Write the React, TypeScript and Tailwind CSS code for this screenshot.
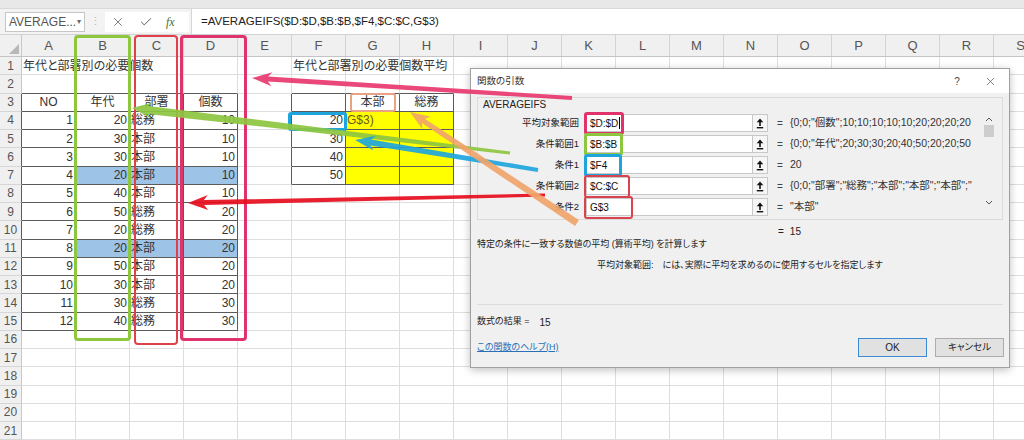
import React from 'react';
import clsx from 'clsx';
import { X, Check } from 'lucide-react';

const COLS = 'ABCDEFGHIJKLMNOPQRS'.split('');
const ROW_COUNT = 21;

type CellData = { v: string; align: 'left' | 'right' | 'center'; tone?: 'ref' };

const RECORDS: [number, number, string, number][] = [
    [1, 20, '総務', 10],
    [2, 30, '本部', 10],
    [3, 30, '本部', 10],
    [4, 20, '本部', 10],
    [5, 40, '本部', 10],
    [6, 50, '総務', 20],
    [7, 20, '総務', 20],
    [8, 20, '本部', 20],
    [9, 50, '本部', 20],
    [10, 30, '本部', 20],
    [11, 30, '総務', 30],
    [12, 40, '総務', 30],
];

const SHEET: Record<string, CellData> = {
    A1: { v: '年代と部署別の必要個数', align: 'left' },
    F1: { v: '年代と部署別の必要個数平均', align: 'left' },
    A3: { v: 'NO', align: 'center' },
    B3: { v: '年代', align: 'center' },
    C3: { v: '部署', align: 'center' },
    D3: { v: '個数', align: 'center' },
    G3: { v: '本部', align: 'center' },
    H3: { v: '総務', align: 'center' },
    F4: { v: '20', align: 'right' },
    F5: { v: '30', align: 'right' },
    F6: { v: '40', align: 'right' },
    F7: { v: '50', align: 'right' },
    G4: { v: 'G$3)', align: 'left', tone: 'ref' },
};

RECORDS.forEach(([no, age, dept, qty], i) => {
    const r = i + 4;
    SHEET['A' + r] = { v: String(no), align: 'right' };
    SHEET['B' + r] = { v: String(age), align: 'right' };
    SHEET['C' + r] = { v: dept, align: 'left' };
    SHEET['D' + r] = { v: String(qty), align: 'right' };
});

const inTable = (r: number, c: number) =>
    (r >= 3 && r <= 15 && c >= 0 && c <= 3) || (r >= 3 && r <= 7 && c >= 5 && c <= 7);

const fillFor = (r: number, c: number) => {
    if ((r === 7 || r === 11) && c >= 1 && c <= 3) return 'bg-[#9dc3e6]';
    if (r >= 4 && r <= 7 && (c === 6 || c === 7)) return 'bg-[#ffff00]';
    return '';
};

const SheetCell = ({ r, c }: { r: number; c: number }) => {
    const cell = SHEET[COLS[c] + r];
    const rightDark = inTable(r, c) || inTable(r, c + 1);
    const bottomDark = inTable(r, c) || inTable(r + 1, c);

    return (
        <div
            className={clsx(
                'relative h-full w-[54px] shrink-0 border-r border-b',
                rightDark ? 'border-r-[#5b5b5b]' : 'border-r-[#dedede]',
                bottomDark ? 'border-b-[#5b5b5b]' : 'border-b-[#dedede]',
                fillFor(r, c)
            )}
        >
            {cell && (
                <span
                    className={clsx(
                        'absolute inset-y-0 z-10 flex items-center whitespace-nowrap leading-none',
                        cell.align === 'left' && 'left-[1px]',
                        cell.align === 'right' && 'right-[2px]',
                        cell.align === 'center' && 'inset-x-0 justify-center',
                        cell.tone === 'ref' ? 'text-[#6b5a20]' : 'text-[#333]'
                    )}
                >
                    {cell.v}
                </span>
            )}
        </div>
    );
};

const UpArrowIcon = () => (
    <svg width="8" height="11" viewBox="0 0 8 11">
        <path d="M4 0.5 L7.3 4.3 H0.7 Z" fill="#111" />
        <rect x="3.2" y="4" width="1.6" height="4" fill="#111" />
        <rect x="0.8" y="9" width="6.4" height="1.4" fill="#111" />
    </svg>
);

const ARGS = [
    {
        label: '平均対象範囲',
        value: '$D:$D',
        result: '{0;0;"個数";10;10;10;10;10;20;20;20;20',
        mark: 'w-[40px] border-[3px] border-[#e0336b]',
        caret: true,
    },
    {
        label: '条件範囲1',
        value: '$B:$B',
        result: '{0;0;"年代";20;30;30;20;40;50;20;20;50',
        mark: 'w-[39px] border-[3px] border-[#8dc63f]',
    },
    {
        label: '条件1',
        value: '$F4',
        result: '20',
        mark: 'w-[38px] border-[3px] border-[#1ea5de]',
    },
    {
        label: '条件範囲2',
        value: '$C:$C',
        result: '{0;0;"部署";"総務";"本部";"本部";"本部";"',
        mark: 'w-[46px] border-2 border-[#d9434f]',
    },
    {
        label: '条件2',
        value: 'G$3',
        result: '"本部"',
        mark: 'w-[49px] border-2 border-[#d9434f]',
    },
];

// tip -> tail, widths near the head and at the tail
const arrowPoints = (
    tx: number, ty: number, sx: number, sy: number,
    w1: number, w2: number, hl: number, hw: number
) => {
    const len = Math.hypot(sx - tx, sy - ty);
    const ux = (sx - tx) / len;
    const uy = (sy - ty) / len;
    const px = -uy;
    const py = ux;
    const bx = tx + ux * hl;
    const by = ty + uy * hl;
    const nx = tx + ux * (hl * 0.8);
    const ny = ty + uy * (hl * 0.8);
    const pts = [
        [tx, ty],
        [bx + (px * hw) / 2, by + (py * hw) / 2],
        [nx + (px * w1) / 2, ny + (py * w1) / 2],
        [sx + (px * w2) / 2, sy + (py * w2) / 2],
        [sx - (px * w2) / 2, sy - (py * w2) / 2],
        [nx - (px * w1) / 2, ny - (py * w1) / 2],
        [bx - (px * hw) / 2, by - (py * hw) / 2],
    ];
    return pts.map(p => p.map(n => n.toFixed(1)).join(',')).join(' ');
};

const ARROWS = [
    { color: '#e8386f', pts: arrowPoints(252, 78, 572, 98, 5, 4, 20, 14) },
    { color: '#8dc63f', pts: arrowPoints(132, 108, 510, 153, 8, 3, 20, 16) },
    { color: '#1ea5de', pts: arrowPoints(355, 140, 538, 170, 6, 4, 20, 15) },
    { color: '#e60c1c', pts: arrowPoints(188, 203, 545, 195, 5, 3, 20, 15) },
    { color: '#f0a46a', pts: arrowPoints(410, 112, 577, 223, 5, 7, 20, 15) },
];

const FunctionDialog = () => (
    <div className="absolute left-[470px] top-[68px] z-30 flex h-[300px] w-[540px] flex-col border border-[#a0a0a0] bg-[#f0f0f0] text-[9px] text-[#222] shadow-[0_2px_8px_rgba(0,0,0,0.25)] [font-feature-settings:'palt']">
        <div className="flex h-[24px] shrink-0 items-center bg-white pl-[6px] pr-[12px]">
            <span className="text-[9.5px] text-[#333]">関数の引数</span>
            <div className="ml-auto flex items-center gap-[20px] text-[#444]">
                <span className="w-[14px] text-center text-[10px]">?</span>
                <X size={13} strokeWidth={1.2} color="#444" />
            </div>
        </div>

        <div className="mx-[6px] mt-[4px] flex h-[123px] border border-[#dadada]">
            <div className="flex min-w-0 flex-1 flex-col">
                <div className="h-[13px] pl-[5px] text-[10px] leading-[13px] text-[#222]">AVERAGEIFS</div>
                <div className="mt-[3px] flex flex-col gap-[3px]">
                    {ARGS.map(arg => (
                        <div key={arg.label} className="flex h-[18px] items-center">
                            <div className="w-[101px] text-right text-[9.5px] text-[#222]">{arg.label}</div>
                            <div className="relative ml-[7px] flex h-full w-[182px] items-center border border-[#c8c8c8] bg-white">
                                <span className="pl-[3px] text-[10px] text-[#111]">{arg.value}</span>
                                {arg.caret && <span className="ml-[1px] h-[12px] w-px bg-black" />}
                                <div className="ml-auto flex h-full w-[15px] items-center justify-center border-l border-[#c8c8c8] bg-[#f6f6f6]">
                                    <UpArrowIcon />
                                </div>
                                <div className={clsx('absolute -left-[3px] -top-[3px] h-[23px] rounded-[3px]', arg.mark)} />
                            </div>
                            <span className="ml-[9px] w-[13px] text-[10px] text-[#444]">=</span>
                            <span className="w-[188px] whitespace-nowrap text-[10.5px] text-[#333]">
                                {arg.result}
                            </span>
                        </div>
                    ))}
                </div>
            </div>
            <div className="mr-[7px] flex w-[12px] flex-col items-center pt-[19px]">
                <svg width="8" height="5" viewBox="0 0 8 5">
                    <path d="M1 4 L4 1 L7 4" stroke="#555" strokeWidth="1" fill="none" />
                </svg>
                <div className="mt-[3px] h-[12px] w-[10px] bg-[#cdcdcd]" />
                <svg className="mt-[63px]" width="8" height="5" viewBox="0 0 8 5">
                    <path d="M1 1 L4 4 L7 1" stroke="#555" strokeWidth="1" fill="none" />
                </svg>
            </div>
        </div>

        <div className="mt-[4px] flex h-[14px] items-center pl-[307px] text-[10px] text-[#222]">
            <span>=</span>
            <span className="ml-[6px]">15</span>
        </div>
        <div className="flex h-[14px] items-center pl-[6px]">特定の条件に一致する数値の平均 (算術平均) を計算します</div>
        <div className="mt-[7px] flex h-[14px] items-center pl-[126px]">
            <span>平均対象範囲:</span>
            <span className="ml-[9px]">には、実際に平均を求めるのに使用するセルを指定します</span>
        </div>
        <div className="mx-[6px] mt-[31px] border-t border-[#dcdcdc]" />
        <div className="mt-[10px] flex h-[14px] items-center pl-[6px]">
            <span>数式の結果 =</span>
            <span className="ml-[10px] text-[10px]">15</span>
        </div>
        <div className="mt-[9px] flex h-[19px] items-center pl-[6px] pr-[5px]">
            <span className="text-[#2a6fb8] underline">この関数のヘルプ(H)</span>
            <div className="ml-auto flex gap-[8px]">
                <div className="flex h-[19px] w-[69px] items-center justify-center border border-[#3a8ad6] bg-[#e1e1e1] text-[10px]">OK</div>
                <div className="flex h-[19px] w-[69px] items-center justify-center border border-[#adadad] bg-[#e1e1e1] text-[9.5px]">キャンセル</div>
            </div>
        </div>
    </div>
);

const App: React.FC = () => {
    return (
        <div className="relative h-[440px] w-[1024px] overflow-hidden bg-white font-['Liberation_Sans','Noto_Sans_CJK_JP',sans-serif]">
            {/* ribbon edge */}
            <div className="h-[9px] border-b border-[#d9d9d9] bg-[#e8e8e8]" />

            {/* formula bar */}
            <div className="flex h-[26px] items-center border-b border-[#d2d2d2] bg-[#f3f3f3]">
                <div className="ml-[5px] flex h-[20px] w-[80px] items-center border border-[#c6c6c6] bg-white pl-[3px] pr-[3px]">
                    <span className="text-[12px] text-[#555]">AVERAGE...</span>
                    <span className="ml-auto text-[8px] text-[#666]">▾</span>
                </div>
                <span className="w-[20px] text-center text-[11px] text-[#b5b5b5]">⋮</span>
                <div className="flex h-[20px] w-[84px] items-center bg-white">
                    <X className="ml-[6px]" size={14} strokeWidth={1.3} color="#555" />
                    <Check className="ml-[14px]" size={14} strokeWidth={1.6} color="#555" />
                    <span className="ml-[13px] font-['Liberation_Serif',serif] text-[12px] italic text-[#4b6e2a]">fx</span>
                </div>
                <div className="ml-[2px] flex h-full flex-1 items-center border-l border-[#d6d6d6] bg-white pl-[9px] text-[11.5px] text-[#222]">
                    =AVERAGEIFS($D:$D,$B:$B,$F4,$C:$C,G$3)
                </div>
            </div>

            {/* column headers */}
            <div className="flex h-[22px] border-b border-[#c4c4c4] bg-[#f0f0f0]">
                <div className="relative w-[22px] shrink-0 border-r border-[#c8c8c8]">
                    <svg className="absolute bottom-[2px] right-[2px]" width="10" height="10" viewBox="0 0 10 10">
                        <path d="M10 0 L10 10 L0 10 Z" fill="#b8b8b8" />
                    </svg>
                </div>
                {COLS.map(col => (
                    <div
                        key={col}
                        className="flex w-[54px] shrink-0 items-center justify-center border-r border-[#d4d4d4] text-[13px] text-[#555]"
                    >
                        {col}
                    </div>
                ))}
            </div>

            {/* sheet rows */}
            <div className="text-[12px] [font-feature-settings:'palt']">
                {Array.from({ length: ROW_COUNT }, (_, i) => i + 1).map(r => (
                    <div key={r} className="flex h-[18.25px]">
                        <div
                            className={clsx(
                                'flex w-[22px] shrink-0 items-center justify-center border-r border-b border-b-[#d6d6d6] bg-[#f0f0f0] text-[12px] text-[#555]',
                                inTable(r, 0) ? 'border-r-[#5b5b5b]' : 'border-r-[#c8c8c8]'
                            )}
                        >
                            {r}
                        </div>
                        {COLS.map((col, c) => (
                            <SheetCell key={col} r={r} c={c} />
                        ))}
                    </div>
                ))}
            </div>

            {/* annotation frames */}
            <div className="absolute left-[74px] top-[35px] z-20 h-[306px] w-[57px] rounded-[4px] border-[3px] border-[#8dc63f]" />
            <div className="absolute left-[134px] top-[35px] z-20 h-[310px] w-[44px] rounded-[4px] border-2 border-[#e0404a]" />
            <div className="absolute left-[180px] top-[35px] z-20 h-[306px] w-[67px] rounded-[4px] border-[3px] border-[#e0336b]" />
            <div className="absolute left-[350px] top-[93px] z-20 h-[19px] w-[46px] rounded-[3px] border-2 border-[#e8a383]" />
            <div className="absolute left-[288px] top-[112px] z-20 h-[19px] w-[59px] rounded-[3px] border-[3px] border-[#1ea5de]" />

            <FunctionDialog />

            {/* arrows */}
            <svg className="pointer-events-none absolute left-0 top-0 z-40" width="1024" height="440" viewBox="0 0 1024 440">
                {ARROWS.map(a => (
                    <polygon key={a.color} points={a.pts} fill={a.color} fillOpacity={0.92} />
                ))}
            </svg>
        </div>
    );
};

export default App;
